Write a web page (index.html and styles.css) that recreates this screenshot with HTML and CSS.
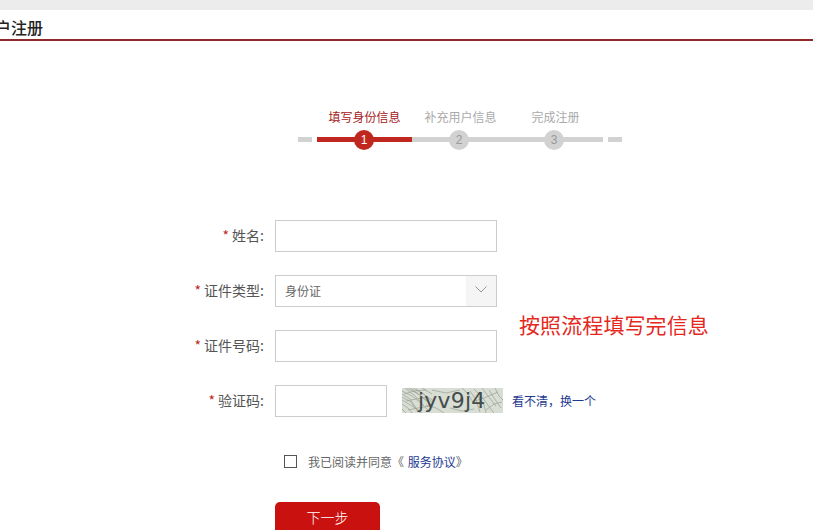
FILE: index.html
```html
<!DOCTYPE html>
<html>
<head>
  <meta charset="utf-8">
  <meta name="viewport" content="width=device-width, initial-scale=1">
  <title>用户注册</title>
  <link rel="stylesheet" href="styles.css">
</head>
<body>
  <div class="top-bar"></div>
  <h1 class="page-title">用户注册</h1>

  <div class="steps">
    <div class="step-end"></div>
    <div class="step active">
      <div class="step-name">填写身份信息</div>
      <div class="step-line"><span class="step-num">1</span></div>
    </div>
    <div class="step">
      <div class="step-name">补充用户信息</div>
      <div class="step-line"><span class="step-num">2</span></div>
    </div>
    <div class="step last">
      <div class="step-name">完成注册</div>
      <div class="step-line"><span class="step-num">3</span></div>
    </div>
    <div class="step-end"></div>
  </div>

  <form class="form">
    <div class="form-row">
      <label class="form-label"><i>*</i> 姓名:</label>
      <input class="text-input" type="text">
    </div>
    <div class="form-row">
      <label class="form-label"><i>*</i> 证件类型:</label>
      <div class="select-box">
        <span class="select-value">身份证</span>
        <span class="select-arrow">
          <svg width="12" height="7" viewBox="0 0 12 7"><path d="M.5.5 6 6 11.5.5" fill="none" stroke="#999" stroke-width="1"/></svg>
        </span>
      </div>
    </div>
    <div class="form-row">
      <label class="form-label"><i>*</i> 证件号码:</label>
      <input class="text-input" type="text">
    </div>
    <div class="form-row">
      <label class="form-label"><i>*</i> 验证码:</label>
      <input class="text-input code-input" type="text">
      <svg class="captcha" width="101" height="25" viewBox="0 0 101 25">
        <rect width="101" height="25" fill="#d9ded4"/>
        <g fill="none" stroke="#99a093" stroke-width=".7">
          <path d="M0 3 10 8 20 16 28 24M3 0 14 9 22 18M0 9 9 14 16 24M8 0 18 7 27 15M14 1 24 8 30 14M0 16 6 20 10 25M20 0 30 6M0 21 4 25M0 6 8 11 14 20 18 25M5 0 16 6 25 13M11 0 20 5 32 13"/>
          <path d="M2 6 12 3 24 2M4 13 14 11 26 9M6 22 16 20 28 18M0 12 10 18 20 25M24 17 34 20 42 25"/>
          <path d="M72 1 80 9 88 20 92 25M80 0 86 8 94 18M87 2 92 10 99 20M76 8 82 17 84 25M68 3 74 12 78 24M93 0 97 8 101 12M60 0 66 6 72 16"/>
          <path d="M70 14 82 10 96 4M84 22 92 16 100 14M30 2 44 5 58 2M48 20 60 23 72 21"/>
        </g>
        <text class="captcha-text" x="16" y="20">jyv9j4</text>
      </svg>
      <a class="link captcha-link">看不清，换一个</a>
    </div>

    <div class="agree">
      <span class="checkbox"></span>
      <span>我已阅读并同意《 <a class="link">服务协议</a>》</span>
    </div>

    <button class="next-btn" type="button">下一步</button>
  </form>

  <div class="note">按照流程填写完信息</div>
</body>
</html>
```

FILE: styles.css
```css
* {
  box-sizing: border-box;
}

html, body {
  height: 530px;
  overflow: hidden;
}

body {
  margin: 0;
  background: #fff;
  color: #444;
  font-family: "Noto Sans CJK SC", "Liberation Sans", sans-serif;
  font-size: 12px;
  position: relative;
}

.top-bar {
  height: 10px;
  background: #ececec;
}

.page-title {
  margin: 0 0 0 -21px;
  height: 31px;
  line-height: 35px;
  font-size: 16px;
  font-weight: 500;
  color: #222;
  border-bottom: 2px solid #8e2a2a;
}

/* steps */
.steps {
  display: flex;
  margin: 59px 0 0 298px;
  width: 325px;
  align-items: flex-end;
}

.step {
  width: 95px;
}

.step.last {
  width: 96px;
}

.step.last .step-name {
  width: 95px;
}

.step-name {
  height: 37px;
  padding-bottom: 3px;
  line-height: 34px;
  text-align: center;
  white-space: nowrap;
  color: #aaa;
}

.step + .step .step-name {
  padding-left: 2px;
}

.step-line {
  height: 5px;
  margin-bottom: 8px;
  padding-right: 1px;
  background: #d2d2d2;
  display: flex;
  align-items: center;
  justify-content: center;
}

.step.last .step-line {
  padding-right: 2px;
}

.step-num {
  flex: none;
  width: 20px;
  height: 20px;
  border-radius: 50%;
  background: #d2d2d2;
  color: #999;
  text-align: center;
  line-height: 20px;
  font-size: 12px;
  font-family: "Liberation Sans", sans-serif;
}

.step-end {
  width: 14px;
  height: 5px;
  margin: 0 5px 8px 0;
  background: #d2d2d2;
}

.step-end:last-child {
  margin: 0 0 8px 5px;
}

.step.active .step-name {
  color: #a3201c;
}

.step.active .step-line,
.step.active .step-num {
  background: #c0281f;
}

.step.active .step-num {
  color: #fff;
}

/* form */
.form {
  margin-top: 70px;
}

.form-row {
  display: flex;
  align-items: center;
  height: 32px;
  margin-bottom: 23px;
}

.form-label {
  width: 267px;
  margin-right: 8px;
  padding: 0 3px 2px 0;
  text-align: right;
  font-size: 14px;
  color: #555;
  white-space: nowrap;
}

.form-label i {
  font-style: normal;
  color: #c0281f;
}

.text-input {
  width: 222px;
  height: 32px;
  padding: 0 10px;
  border: 1px solid #ccc;
  background: #fff;
  outline: none;
}

.code-input {
  width: 112px;
}

.select-box {
  width: 222px;
  height: 32px;
  border: 1px solid #ccc;
  display: flex;
  justify-content: space-between;
}

.select-value {
  padding-left: 9px;
  line-height: 30px;
  color: #666;
}

.select-arrow {
  width: 30px;
  padding-bottom: 3px;
  background: #f5f5f5;
  display: flex;
  align-items: center;
  justify-content: center;
}

.captcha {
  margin: 0 0 2px 15px;
}

.captcha-text {
  font-family: "DejaVu Sans", sans-serif;
  font-size: 22px;
  fill: #444c4c;
  letter-spacing: .2px;
}

.link {
  color: #1d3a8f;
}

.captcha-link {
  margin: 0 0 2px 9px;
}

.agree {
  display: flex;
  align-items: center;
  height: 18px;
  margin: 35px 0 0 284px;
  color: #666;
  word-spacing: 1px;
}

.checkbox {
  width: 13px;
  height: 13px;
  margin-right: 11px;
  border: 1px solid #555;
}

.next-btn {
  display: block;
  width: 105px;
  height: 40px;
  margin: 32px 0 0 275px;
  border: 0;
  border-radius: 5px;
  background: #c9110f;
  color: #fff;
  font-family: inherit;
  font-size: 14px;
  font-weight: 300;
  padding-bottom: 11px;
}

/* red annotation pasted over the form */
.note {
  position: absolute;
  left: 519px;
  top: 308px;
  font-size: 21px;
  line-height: 32px;
  letter-spacing: .1px;
  color: #e5281e;
  white-space: nowrap;
}
```
